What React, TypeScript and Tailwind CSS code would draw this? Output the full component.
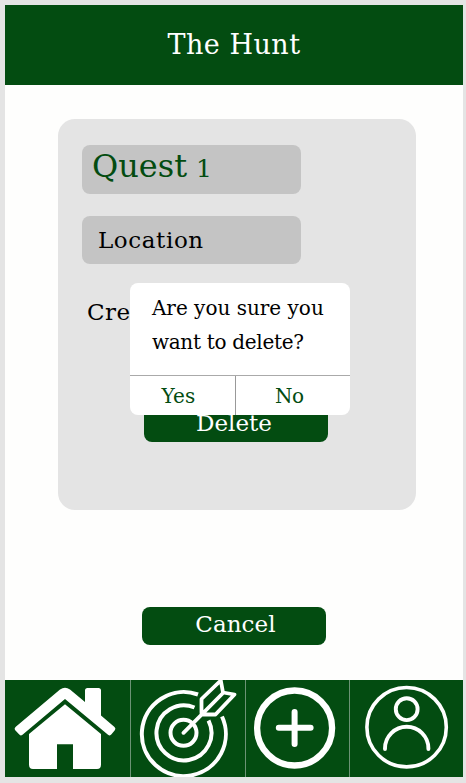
function HomeIcon() {
  return (
    <svg width="125" height="97" viewBox="5 680 125 97" fill="#fff">
      <path d="M60 689.5Q65 685.8 70 689.5L85 702V690.5Q85 688 87.5 688H98.500Q101 688 101 690.500V715.500L114.500 727Q116 728.500 115 730L111.500 734.300Q110 736.300 108 734.700L65 699L22.500 734.700Q20.500 736.300 19 734.300L15 730Q14 728.500 15.500 727Z" />
      <path d="M65 704.300L101 734V764.500Q101 769 97 769H73V744.300H57V769H33Q29 769 29 764.500V734Z" />
    </svg>
  );
}

function TargetIcon() {
  return (
    <svg width="114" height="97" viewBox="131 680 114 97" fill="none" stroke="#fff" strokeWidth="4">
      <path d="M198 694.5A42 42 0 1 0 222 716.5" />
      <path d="M194.500 707.500A27.500 27.500 0 1 0 208.500 720.500" />
      <circle cx="183.500" cy="732.800" r="13" />
      <path d="M183.500 732.800L223 693M201.500 713.500V699L220.800 680.500L223 692.500L234.500 694.500L215.500 714.500H202" strokeLinecap="round" strokeLinejoin="round" strokeWidth="3.800" />
    </svg>
  );
}

function PlusIcon() {
  return (
    <svg width="103" height="97" viewBox="246 680 103 97" fill="none" stroke="#fff">
      <circle cx="294.600" cy="728" r="37.500" strokeWidth="6.300" />
      <path d="M294.600 712V744M278.800 727.800H310.600" strokeWidth="6" strokeLinecap="round" />
    </svg>
  );
}

function ProfileIcon() {
  return (
    <svg width="113" height="97" viewBox="350 680 113 97" fill="none" stroke="#fff" strokeWidth="3.900">
      <circle cx="406.600" cy="727.200" r="39.700" strokeWidth="3.600" />
      <circle cx="406.700" cy="709.200" r="10.900" />
      <path d="M385 749V748.500A21.700 21.700 0 0 1 428.400 748.500V749" strokeLinecap="round" />
    </svg>
  );
}

function DeleteDialog() {
  return (
    <div className="absolute left-[71.5px] top-[164.5px] flex h-[132px] w-[220px] flex-col overflow-hidden rounded-lg bg-white text-[20px]">
      <p className="h-[92px] whitespace-nowrap pl-[22px] pt-[8px] leading-[34px] text-black">
        Are you sure you
        <br />
        <span className="tracking-[-0.3px]">want to delete?</span>
      </p>
      <div className="flex h-10 border-t border-[#aaa] text-[#034c11]">
        <button className="w-[106px] border-r border-[#999] pr-2 leading-[40px]">Yes</button>
        <button className="flex-1 pl-1 pr-[11px] leading-[40px] tracking-[-0.5px]">No</button>
      </div>
    </div>
  );
}

export default function App() {
  return (
    <div className="h-[783px] w-[466px] bg-[#e4e4e4] pl-[5px] pt-[5px] font-['DejaVu_Serif',serif]">
      <div className="flex h-[772px] w-[458px] flex-col bg-[#fefefd]">
        <header className="h-20 bg-[#034c11] text-center text-[27px] leading-[80px] tracking-[0.5px] text-white">
          The Hunt
        </header>
        <main className="flex h-[595px] flex-col pl-[53.4px] pt-[33.5px]">
          <section className="relative h-[391.5px] w-[358px] rounded-[17px] bg-[#e4e4e4] pl-[23.6px] pt-[26.5px]">
            <div className="h-[48.5px] w-[219px] rounded-lg bg-[#c4c4c4] pl-[10px] text-[32px] leading-[42px] text-[#034c11]">
              Quest<span className="ml-[9px] text-[25px]">1</span>
            </div>
            <div className="mt-[22px] h-[48.5px] w-[219px] rounded-lg bg-[#c4c4c4] pl-4 text-[23px] leading-[49px] tracking-[0.6px] text-black">
              Location
            </div>
            <div className="ml-1 mt-6 h-[50px] pl-px text-[23px] leading-[49px] tracking-[0.4px] text-black">Cre</div>
            <button className="ml-[62px] mt-[66px] block h-[38px] w-[184px] rounded-lg bg-[#034c11] pr-1 text-[23px] leading-[38px] text-white">
              Delete
            </button>
            <DeleteDialog />
          </section>
          <button className="ml-[83.6px] mt-[97px] flex h-[38px] w-[184px] justify-center rounded-lg bg-[#034c11] pl-[3px] text-[23px] leading-[35px] tracking-[0.1px] text-white">
            Cancel
          </button>
        </main>
        <nav className="flex h-[97px] divide-x divide-[#6c9375] bg-[#034c11]">
          <button className="w-[126px]"><HomeIcon /></button>
          <button className="w-[115px]"><TargetIcon /></button>
          <button className="w-[104px]"><PlusIcon /></button>
          <button className="w-[113px]"><ProfileIcon /></button>
        </nav>
      </div>
    </div>
  );
}
